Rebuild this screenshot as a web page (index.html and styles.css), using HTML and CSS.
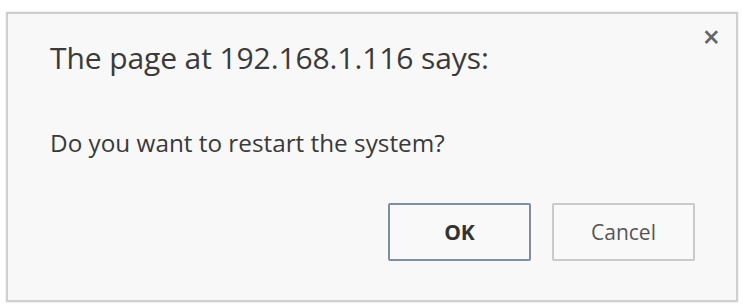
FILE: index.html
```html
<!DOCTYPE html>
<html>
<head>
<meta charset="utf-8">
<link rel="stylesheet" href="styles.css">
</head>
<body>
<div class="dialog">
  <div class="head">
    <h1 class="title">The page at 192.168.1.116 says:</h1>
    <span class="close">×</span>
  </div>
  <p class="message">Do you want to restart the system?</p>
  <div class="actions">
    <button class="btn btn-ok">OK</button>
    <button class="btn btn-cancel">Cancel</button>
  </div>
</div>
</body>
</html>
```
FILE: styles.css
```css
html, body {
  margin: 0;
  padding: 0;
  background: #ffffff;
}
body {
  padding: 12px 5px 4px 6px;
  font-family: "Open Sans", "Noto Sans", sans-serif;
  color: #333;
}
.dialog {
  box-sizing: border-box;
  width: 732px;
  height: 290px;
  background: #f8f8f8;
  border: 2px solid #cfcfcf;
  box-shadow: 0 0 2px rgba(0,0,0,0.15);
  padding: 0 42px 0 42px;
  display: flex;
  flex-direction: column;
}
.head {
  display: flex;
  justify-content: space-between;
  align-items: flex-start;
  height: 98px;
}
.title {
  margin: 24px 0 0 0;
  font-size: 30px;
  font-weight: 400;
  color: #3a3a3a;
  line-height: 40px;
  letter-spacing: -0.1px;
}
.close {
  margin-top: 7px;
  margin-right: -26px;
  font-size: 30px;
  font-weight: 600;
  color: #666;
  line-height: 32px;
}
.message {
  margin: 15px 0 0 0;
  font-size: 24.3px;
  line-height: 32px;
  color: #3a3a3a;
}
.actions {
  display: flex;
  justify-content: flex-end;
  gap: 21px;
  margin-top: 44px;
  margin-right: -1px;
}
.btn {
  width: 143px;
  height: 58px;
  font-family: "Open Sans", "Noto Sans", sans-serif;
  font-size: 21px;
  background: #f9f9f9;
  border-radius: 2px;
  color: #333;
}
.btn-ok {
  border: 2px solid #7d8ea6;
  font-weight: 700;
}
.btn-cancel {
  border: 2px solid #cacaca;
  color: #555;
}
```
